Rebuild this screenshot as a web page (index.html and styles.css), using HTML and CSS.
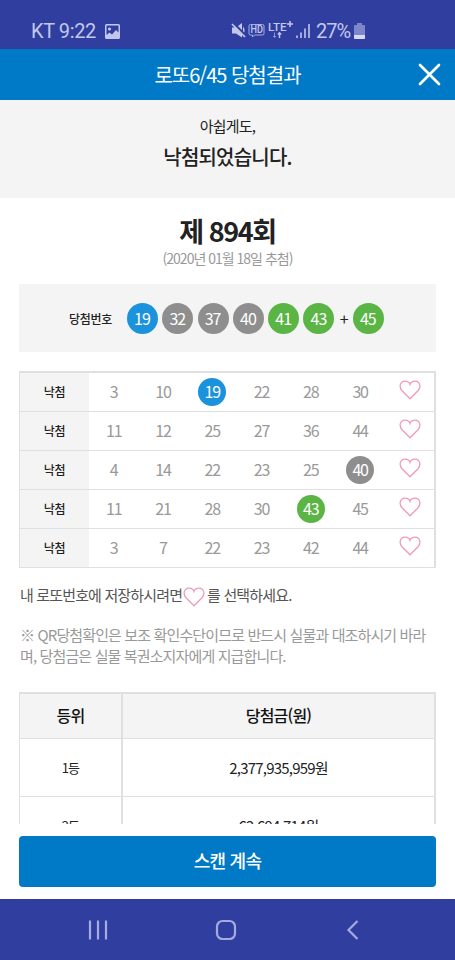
FILE: index.html
```html
<!DOCTYPE html>
<html lang="ko">
<head>
    <meta charset="UTF-8">
    <meta name="viewport" content="width=device-width, initial-scale=1.0">
    <title>로또6/45 당첨결과</title>
    <link rel="stylesheet" href="styles.css">
</head>
<body>
    <svg width="0" height="0" class="defs">
        <symbol id="heart" viewBox="0 0 22 20">
            <path d="M11 18.8 L3 10.8 C-0.2 7.2 0.8 1.4 5.8 1.1 C8.6 1 10.3 2.3 11 4.4 C11.7 2.3 13.4 1 16.2 1.1 C21.2 1.4 22.2 7.2 19 10.8 Z"/>
        </symbol>
    </svg>

    <div class="status">
        <span class="carrier">KT 9:22</span>
        <svg class="photo" width="15" height="15" viewBox="0 0 15 15">
            <path fill="#c3c7ec" fill-rule="evenodd" d="M1.500 0h12A1.500 1.500 0 0 1 15 1.500v12a1.500 1.500 0 0 1-1.500 1.500h-12A1.500 1.500 0 0 1 0 13.500v-12A1.500 1.500 0 0 1 1.500 0zM1.500 1.500v9.500l3-2.500 2.500 2 4-4.500 2.500 2.500V1.500z"/>
            <circle cx="4.500" cy="5" r="1.600" fill="#c3c7ec"/>
        </svg>
        <svg class="signals" width="80" height="20" viewBox="0 0 80 20">
            <g fill="#c3c7ec">
                <path d="M1 6.500h4l6-4.500v14.500L5 12.500H1z"/>
                <path d="M12 5.500q3 4 0 8z"/>
            </g>
            <path d="M2 1.500l12.500 13" stroke="#303f9f" stroke-width="2.500"/>
            <path d="M1 3l13 13" stroke="#c3c7ec" stroke-width="1.700"/>
            <path d="M19.500 3.500h12a1.500 1.500 0 0 1 1.500 1.500v7.500a1.500 1.500 0 0 1-1.500 1.500h-8l-2 2v-2h-2a1.500 1.500 0 0 1-1.500-1.500V5a1.500 1.500 0 0 1 1.500-1.500z" fill="none" stroke="#a9aee0"/>
            <text class="tiny" x="19.500" y="12.400" font-size="10" textLength="12.500" lengthAdjust="spacingAndGlyphs">HD</text>
            <text class="tiny" x="37" y="10" font-size="11.500" textLength="18.500">LTE</text>
            <path d="M56 3h6M59 0v6" stroke="#c3c7ec" stroke-width="1.500"/>
            <path d="M43.500 11.500v5M42 15l1.500 1.500L45 15" stroke="#8c93d2" fill="none"/>
            <path d="M48.500 17v-5M46.800 13.500l1.700-1.700 1.700 1.700" stroke="#c3c7ec" stroke-width="1.400" fill="none"/>
            <path d="M66 17v-2.500M70 17v-5.500M74 17V7.500M78 17V3" stroke="#b8bde8" stroke-width="1.700"/>
        </svg>
        <span class="percent">27%</span>
        <svg class="battery" width="11" height="16" viewBox="0 0 11 16">
            <path fill="#7d86cb" d="M3 0h5v2h2a1 1 0 0 1 1 1v12a1 1 0 0 1-1 1H1a1 1 0 0 1-1-1V3a1 1 0 0 1 1-1h2z"/>
            <path fill="#d8daf4" d="M0 12h11v3a1 1 0 0 1-1 1H1a1 1 0 0 1-1-1z"/>
        </svg>
    </div>

    <header class="header">
        <h1>로또6/45 당첨결과</h1>
        <svg class="close" width="23" height="23" viewBox="0 0 23 23">
            <path d="M2 2l19 19M21 2L2 21" stroke="#fff" stroke-width="2.700" stroke-linecap="round"/>
        </svg>
    </header>

    <main class="content">
        <div class="result">
            <p class="sorry">아쉽게도,</p>
            <p class="lost">낙첨되었습니다.</p>
        </div>

        <h2 class="round">제 894회</h2>
        <p class="date">(2020년 01월 18일 추첨)</p>

        <div class="winning">
            <span class="winning-label">당첨번호</span>
            <span class="ball blue">19</span>
            <span class="ball gray">32</span>
            <span class="ball gray">37</span>
            <span class="ball gray">40</span>
            <span class="ball green">41</span>
            <span class="ball green">43</span>
            <span class="plus">+</span>
            <span class="ball green">45</span>
        </div>

        <div class="games">
            <div class="game">
                <b>낙첨</b><span>3</span><span>10</span><span><i class="ball blue">19</i></span><span>22</span><span>28</span><span>30</span>
                <svg class="heart"><use href="#heart"/></svg>
            </div>
            <div class="game">
                <b>낙첨</b><span>11</span><span>12</span><span>25</span><span>27</span><span>36</span><span>44</span>
                <svg class="heart"><use href="#heart"/></svg>
            </div>
            <div class="game">
                <b>낙첨</b><span>4</span><span>14</span><span>22</span><span>23</span><span>25</span><span><i class="ball gray">40</i></span>
                <svg class="heart"><use href="#heart"/></svg>
            </div>
            <div class="game">
                <b>낙첨</b><span>11</span><span>21</span><span>28</span><span>30</span><span><i class="ball green">43</i></span><span>45</span>
                <svg class="heart"><use href="#heart"/></svg>
            </div>
            <div class="game">
                <b>낙첨</b><span>3</span><span>7</span><span>22</span><span>23</span><span>42</span><span>44</span>
                <svg class="heart"><use href="#heart"/></svg>
            </div>
        </div>

        <p class="save"><span>내 로또번호에 저장하시려면</span><svg class="heart"><use href="#heart"/></svg><span>를 선택하세요.</span></p>
        <p class="notice">※ QR당첨확인은 보조 확인수단이므로 반드시 실물과 대조하시기 바라<br>며, 당첨금은 실물 복권소지자에게 지급합니다.</p>

        <div class="prizes">
            <div class="prize head"><span>등위</span><span>당첨금(원)</span></div>
            <div class="prize"><span>1등</span><span>2,377,935,959원</span></div>
            <div class="prize"><span>2등</span><span>62,694,714원</span></div>
        </div>
    </main>

    <div class="bottom">
        <button class="scan">스캔 계속</button>
    </div>

    <nav class="nav">
        <svg width="20" height="20" viewBox="0 0 20 20"><path d="M2 .5v19M10 .5v19M18 .5v19"/></svg>
        <svg width="22" height="22" viewBox="0 0 22 22"><rect x="2" y="2" width="18" height="18" rx="5.500"/></svg>
        <svg width="20" height="20" viewBox="0 0 20 20"><path d="M14.500 1L5.500 10l9 9"/></svg>
    </nav>
</body>
</html>
```
FILE: styles.css
```css
* {
    box-sizing: border-box;
}
body {
    margin: 0;
    width: 455px;
    height: 960px;
    overflow: hidden;
    display: flex;
    flex-direction: column;
    background: #fff;
    color: #222;
    font-family: "Noto Sans CJK KR", sans-serif;
}
h1, h2, p {
    margin: 0;
}
.defs {
    position: absolute;
}

/* status bar */
.status {
    height: 49px;
    flex: none;
    display: flex;
    align-items: center;
    padding: 13px 0 0 31px;
    background: #303f9f;
    color: #c3c7ec;
    font-family: Roboto, sans-serif;
    font-size: 20px;
    line-height: 24px;
}
.carrier {
    width: 74px;
    letter-spacing: -0.4px;
}
.signals {
    margin-left: 111px;
}
.tiny {
    fill: #c3c7ec;
    font-family: Roboto, sans-serif;
    font-weight: 500;
}
.percent {
    width: 38px;
    margin-left: 5px;
    letter-spacing: -1px;
}

.header {
    height: 51px;
    flex: none;
    display: grid;
    grid-template-columns: 1fr 260px 1fr;
    align-items: center;
    background: #007ac6;
    color: #fff;
    text-align: center;
}
.header h1 {
    grid-column: 2;
    font-size: 20px;
    font-weight: 400;
    line-height: 26px;
    letter-spacing: -1px;
}
.close {
    justify-self: end;
    margin-right: 14px;
}

.content {
    height: 724px;
    flex: none;
    overflow: hidden;
    text-align: center;
    letter-spacing: -0.8px;
}
.result {
    height: 98px;
    padding-top: 16px;
    background: #f4f4f4;
}
.sorry {
    font-size: 15px;
    line-height: 20px;
}
.lost {
    margin-top: 7px;
    font-size: 20px;
    font-weight: 500;
    line-height: 28px;
}
.round {
    margin-top: 15px;
    font-size: 27px;
    font-weight: 700;
    line-height: 36px;
    letter-spacing: -1.4px;
}
.date {
    font-size: 14px;
    line-height: 18px;
    color: #999;
    letter-spacing: -1px;
}
.winning {
    height: 68px;
    margin: 17px 19px 0;
    display: flex;
    align-items: center;
    padding-left: 50px;
    background: #f4f4f4;
}
.winning-label {
    width: 58px;
    text-align: left;
    font-size: 12px;
    font-weight: 500;
    letter-spacing: -0.3px;
}
.ball {
    width: 31px;
    height: 31px;
    flex: none;
    border-radius: 50%;
    color: #fff;
    font-size: 16px;
    font-style: normal;
    line-height: 30px;
    text-align: center;
}
.winning .ball {
    margin-right: 4.3px;
    padding-right: 1px;
    letter-spacing: -1px;
}
.blue {
    background: #1b93dc;
}
.gray {
    background: #8e8e8e;
}
.green {
    background: #5ab544;
}
.plus {
    width: 12px;
    margin-right: 3px;
    margin-left: -1px;
    font-size: 16px;
}

/* my games */
.games {
    height: 197px;
    margin: 19px 19px 0;
    border: solid #e0e0e0;
    border-width: 2px 2px 1px 1px;
}
.game {
    height: 39px;
    display: grid;
    grid-template-columns: 69px repeat(7, 1fr);
    align-items: center;
    justify-items: center;
    border-bottom: 1px solid #e0e0e0;
    font-size: 16px;
    line-height: 24px;
    color: #999;
    letter-spacing: -1.2px;
}
.game:last-child {
    height: 38px;
    border-bottom: 0;
}
.game > span {
    margin-bottom: 2px;
}
.game b {
    align-self: stretch;
    justify-self: stretch;
    background: #f4f4f4;
    color: #222;
    font-size: 12px;
    font-weight: 500;
    line-height: 37px;
    letter-spacing: -0.3px;
}
.game .ball {
    display: block;
    width: 28px;
    height: 28px;
    margin-top: 2px;
    line-height: 27px;
}
.heart {
    width: 22px;
    height: 20px;
    fill: #fff;
    stroke: #f09ab8;
    stroke-width: 1.3;
}
.game .heart {
    width: 22px;
    height: 20px;
    margin: 0 0 4px 1px;
}

.save {
    height: 24px;
    margin: 15px 20px 0;
    display: flex;
    align-items: center;
    font-size: 15px;
    line-height: 24px;
    color: #555;
    letter-spacing: -0.85px;
}
.save .heart {
    margin: 3px 2px 0 1px;
}
.notice {
    margin: 17px 0 0 20px;
    text-align: left;
    white-space: nowrap;
    font-size: 15px;
    line-height: 21px;
    color: #999;
    letter-spacing: -0.87px;
}

.prizes {
    margin: 26px 19px 0;
    border: solid #e0e0e0;
    border-width: 2px 2px 0 1px;
}
.prize {
    height: 58px;
    display: grid;
    grid-template-columns: 103px 1fr;
    border-bottom: 1px solid #e0e0e0;
    font-size: 15px;
    line-height: 57px;
}
.prize span:first-child {
    border-right: 2px solid #e0e0e0;
    font-size: 13px;
}
.prize.head {
    height: 45px;
    background: #f4f4f4;
    color: #111;
    font-weight: 500;
    line-height: 43px;
}
.prize.head span {
    font-size: 16px;
}

.bottom {
    height: 75px;
    flex: none;
    padding: 12px 19px;
}
.scan {
    display: block;
    width: 100%;
    height: 51px;
    padding: 0 0 3px;
    border: none;
    border-radius: 4px;
    background: #007ac6;
    color: #fff;
    font: 500 18px "Noto Sans CJK KR", sans-serif;
    letter-spacing: -0.8px;
}
.nav {
    height: 61px;
    flex: none;
    display: flex;
    align-items: center;
    justify-content: space-between;
    padding: 0 92px 0 88px;
    background: #303f9f;
}
.nav svg {
    fill: none;
    stroke: #a5abe0;
    stroke-width: 2.2;
}
```
